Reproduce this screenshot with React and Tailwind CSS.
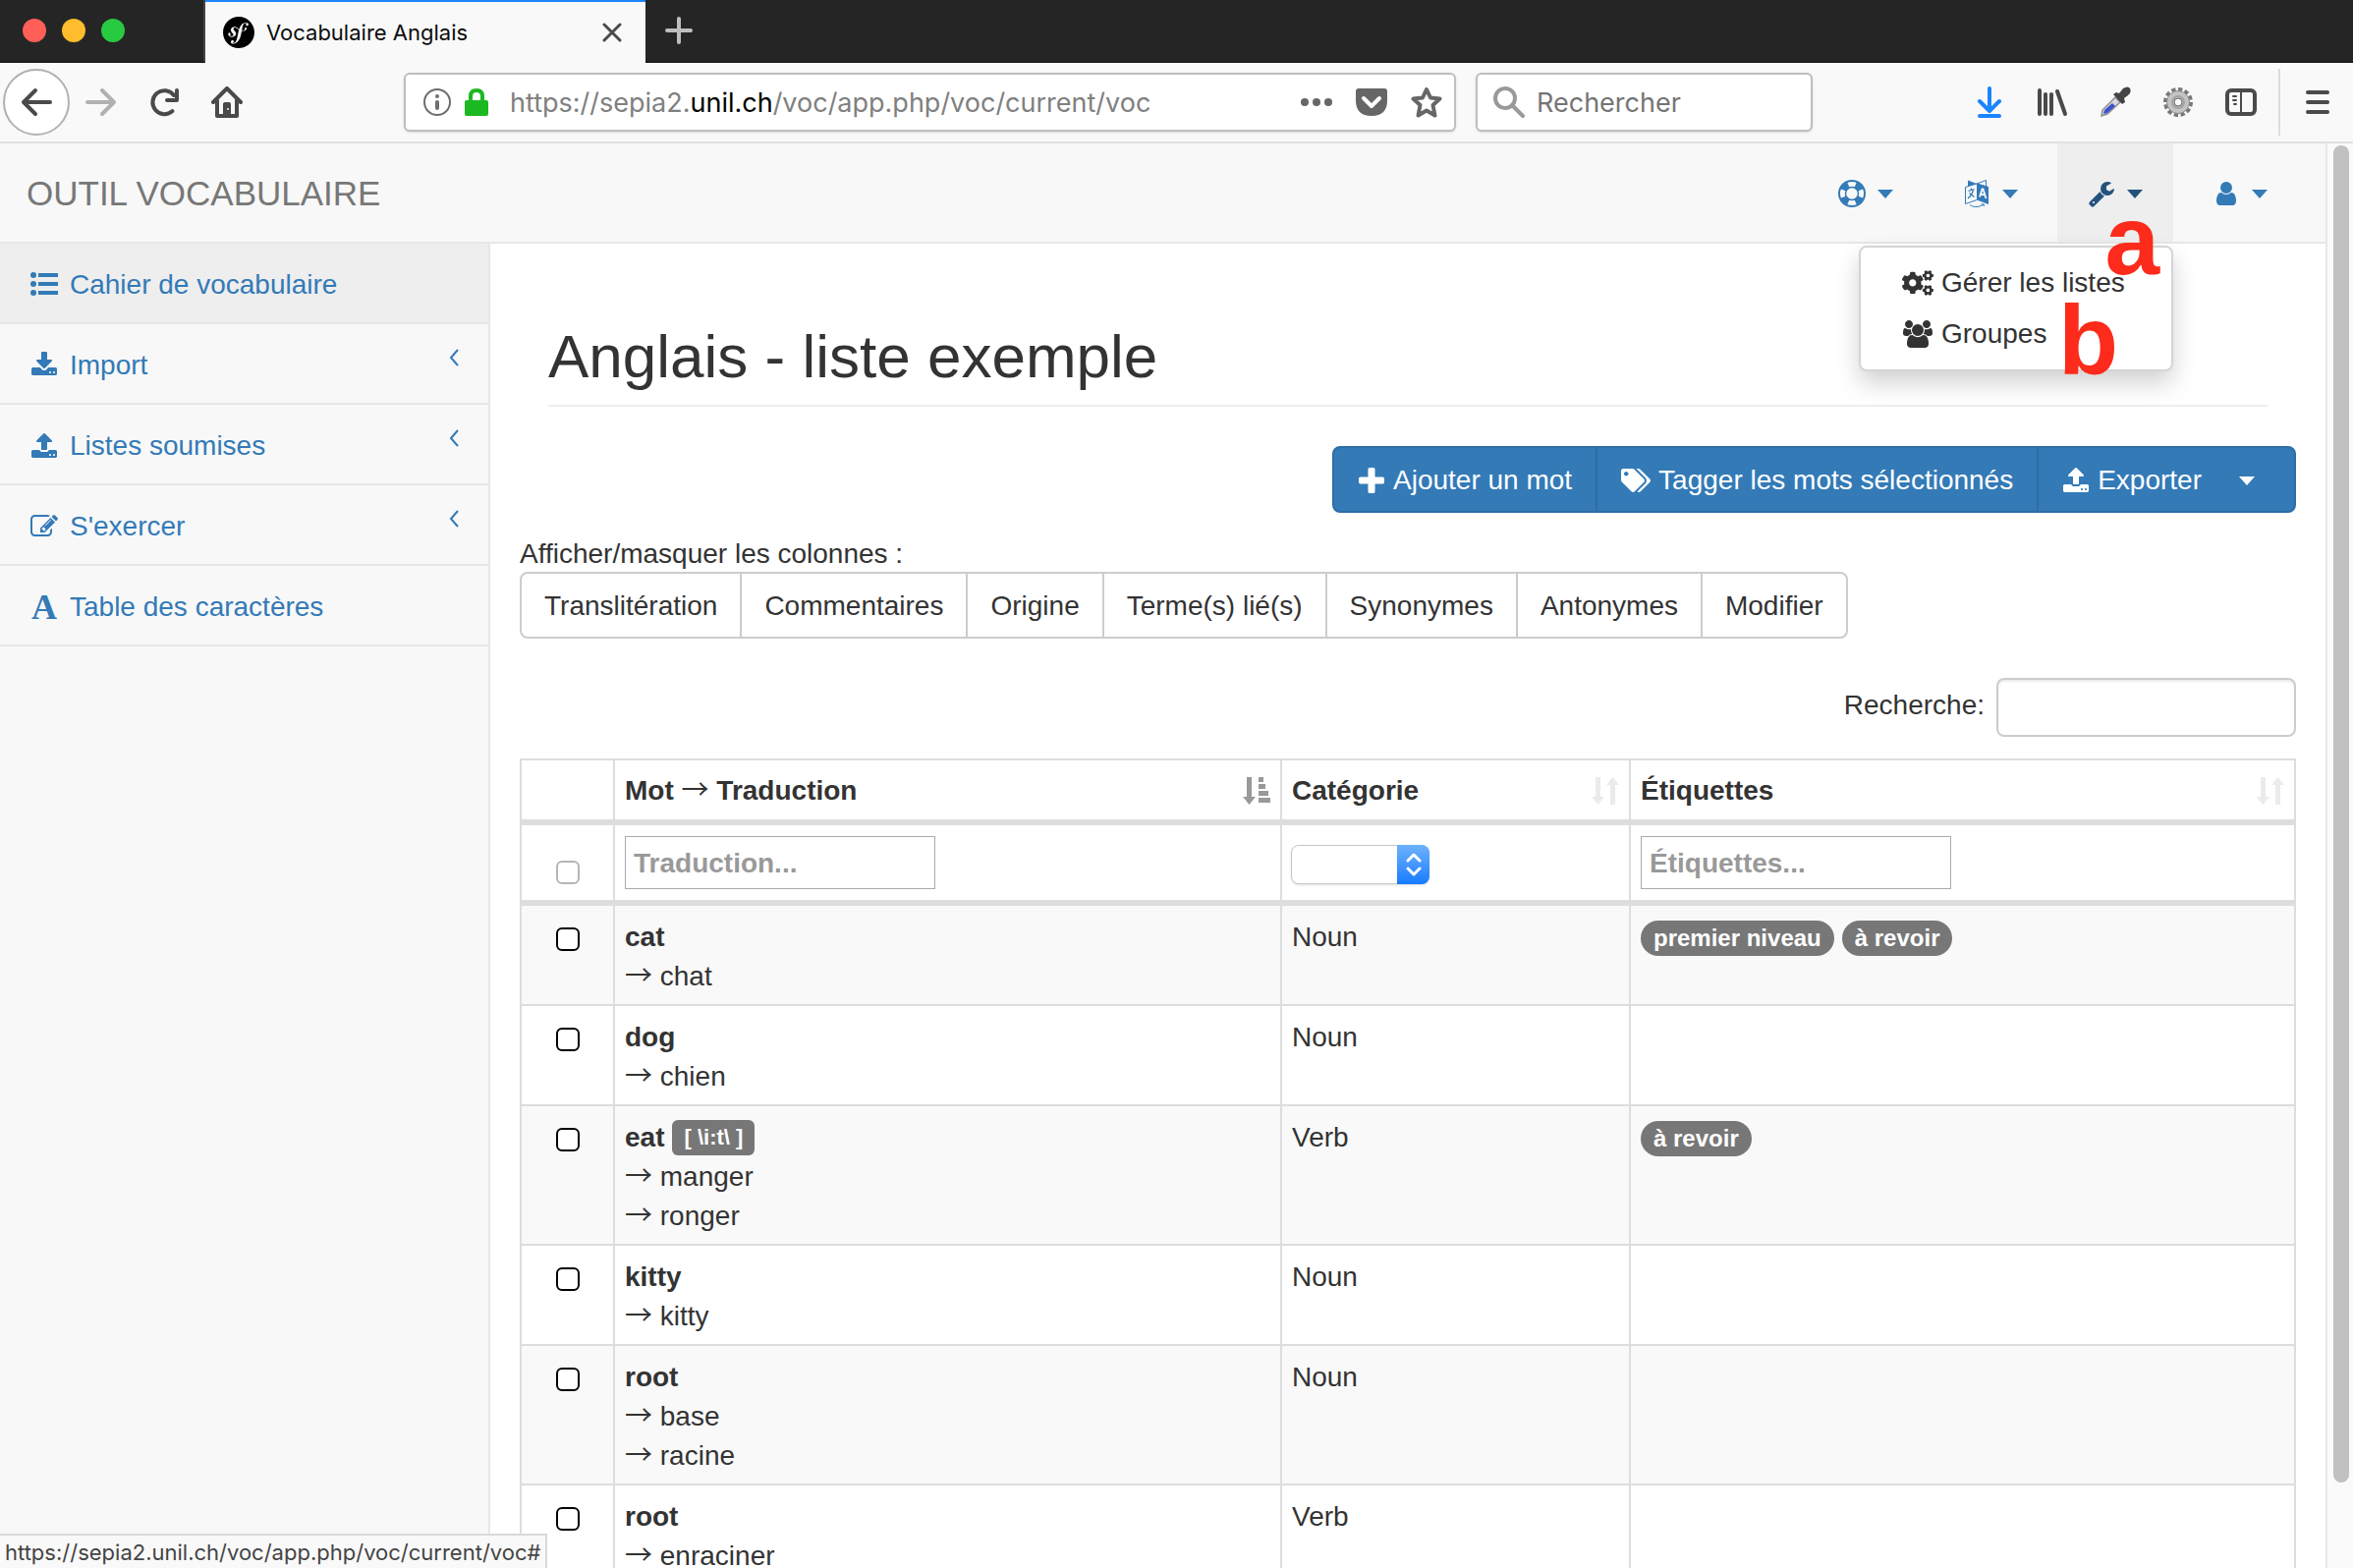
import { useState } from "react";
import { SiSymfony } from "react-icons/si";
import { FaCogs, FaTags } from "react-icons/fa";

const UI_FONT = "font-['Inter',sans-serif]";

const COLUMNS = ["Translitération", "Commentaires", "Origine", "Terme(s) lié(s)", "Synonymes", "Antonymes", "Modifier"];

const WORDS = [
  { id: 1, word: "cat", translations: ["chat"], category: "Noun", tags: ["premier niveau", "à revoir"] },
  { id: 2, word: "dog", translations: ["chien"], category: "Noun", tags: [] },
  { id: 3, word: "eat", phonetic: "[ \\i:t\\ ]", translations: ["manger", "ronger"], category: "Verb", tags: ["à revoir"] },
  { id: 4, word: "kitty", translations: ["kitty"], category: "Noun", tags: [] },
  { id: 5, word: "root", translations: ["base", "racine"], category: "Noun", tags: [] },
  { id: 6, word: "root", translations: ["enraciner"], category: "Verb", tags: [] },
];

/* ---------- icons ---------- */

const PATHS = {
  download: "M1344 1344q0-26-19-45t-45-19-45 19-19 45 19 45 45 19 45-19 19-45zm256 0q0-26-19-45t-45-19-45 19-19 45 19 45 45 19 45-19 19-45zm128-224v320q0 40-28 68t-68 28h-1472q-40 0-68-28t-28-68v-320q0-40 28-68t68-28h465l135 136q58 56 136 56t136-56l136-136h464q40 0 68 28t28 68zm-325-569q17 41-14 70l-448 448q-18 19-45 19t-45-19l-448-448q-31-29-14-70 17-39 59-39h256v-448q0-26 19-45t45-19h256q26 0 45 19t19 45v448h256q42 0 59 39z",
  upload: "M1344 1472q0-26-19-45t-45-19-45 19-19 45 19 45 45 19 45-19 19-45zm256 0q0-26-19-45t-45-19-45 19-19 45 19 45 45 19 45-19 19-45zm128-224v320q0 40-28 68t-68 28h-1472q-40 0-68-28t-28-68v-320q0-40 28-68t68-28h427q21 56 70.5 92t110.5 36h256q61 0 110.5-36t70.5-92h427q40 0 68 28t28 68zm-325-648q-17 40-59 40h-256v448q0 26-19 45t-45 19h-256q-26 0-45-19t-19-45v-448h-256q-42 0-59-40-17-39 14-69l448-448q18-19 45-19t45 19l448 448q31 30 14 69z",
  wrench: "M448 1472q0-26-19-45t-45-19-45 19-19 45 19 45 45 19 45-19 19-45zm644-420l-682 682q-37 37-90 37-52 0-91-37l-106-108q-38-36-38-90 0-53 38-91l681-681q39 98 114.5 173.5t173.5 114.5zm634-435q0 39-23 106-47 134-164.5 217.5t-258.5 83.5q-185 0-316.5-131.5t-131.5-316.5 131.5-316.5 316.5-131.5q58 0 121.5 16.5t107.5 46.5q16 11 16 28t-16 28l-293 169v224l193 107q5-3 79-48.5t135.5-81 70.5-35.5q15 0 23.5 10t8.5 25z",
  user: "M1536 1399q0 109-62.5 187t-150.5 78h-854q-88 0-150.5-78t-62.5-187q0-85 8.5-160.5t31.5-152 58.5-131 94-89 134.5-34.5q131 128 313 128t313-128q76 0 134.5 34.5t94 89 58.5 131 31.5 152 8.5 160.5zm-256-887q0 159-112.5 271.5t-271.5 112.5-271.5-112.5-112.5-271.5 112.5-271.5 271.5-112.5 271.5 112.5 112.5 271.5z",
  plus: "M1600 736v192q0 40-28 68t-68 28h-416v416q0 40-28 68t-68 28h-192q-40 0-68-28t-28-68v-416h-416q-40 0-68-28t-28-68v-192q0-40 28-68t68-28h416v-416q0-40 28-68t68-28h192q40 0 68 28t28 68v416h416q40 0 68 28t28 68z",
  edit: "M888 1184l116-116-152-152-116 116v56h96v96h56zm440-720q-16-16-33 1l-350 350q-17 17-1 33t33-1l350-350q17-17 1-33zm80 594v190q0 119-84.5 203.5t-203.5 84.5h-832q-119 0-203.5-84.5t-84.5-203.5v-832q0-119 84.5-203.5t203.5-84.5h832q63 0 117 25 15 7 18 23 3 17-9 29l-49 49q-14 14-32 8-23-6-45-6h-832q-66 0-113 47t-47 113v832q0 66 47 113t113 47h832q66 0 113-47t47-113v-126q0-13 9-22l64-64q15-15 35-7t20 29zm-96-738l288 288-672 672h-288v-288zm444 132l-92 92-288-288 92-92q28-28 68-28t68 28l152 152q28 28 28 68t-28 68z",
};

function Glyph({ name, viewBox = "0 0 1792 1792", className = "size-7" }) {
  return (
    <svg viewBox={viewBox} fill="currentColor" className={className} aria-hidden="true">
      <path d={PATHS[name]} />
    </svg>
  );
}

function UsersIcon() {
  return (
    <svg viewBox="0 0 2048 1792" fill="currentColor" className="h-7 w-8" aria-hidden="true">
      <path d="M657 896q-162 5-265 128h-134q-82 0-138-40.5t-56-118.5q0-353 124-353 6 0 43.5 21t97.5 42.5 119 21.5q67 0 133-23-5 37-5 66 0 139 81 256zm1071 637q0 120-73 189.5t-194 69.5h-874q-121 0-194-69.5t-73-189.5q0-53 3.5-103.5t14-109 26.5-108.5 43-97.5 62-81 85.5-53.5 111.5-20q10 0 43 21.5t73 48 107 48 135 21.5 135-21.5 107-48 73-48 43-21.5q61 0 111.5 20t85.5 53.5 62 81 43 97.5 26.5 108.5 14 109 3.5 103.5zm-1024-1277q0 106-75 181t-181 75-181-75-75-181 75-181 181-75 181 75 75 181zm704 384q0 159-112.5 271.5t-271.5 112.5-271.5-112.5-112.5-271.5 112.5-271.5 271.5-112.5 271.5 112.5 112.5 271.5zm576 225q0 78-56 118.5t-138 40.5h-134q-103-123-265-128 81-117 81-256 0-29-5-66 66 23 133 23 59 0 119-21.5t97.5-42.5 43.5-21q124 0 124 353zm-128-609q0 106-75 181t-181 75-181-75-75-181 75-181 181-75 181 75 75 181z" />
    </svg>
  );
}

function ListIcon() {
  return (
    <svg viewBox="0 0 28 28" fill="currentColor" className="size-7" aria-hidden="true">
      <circle cx="3" cy="4" r="3" />
      <circle cx="3" cy="13" r="3" />
      <circle cx="3" cy="22" r="3" />
      <path d="M8 2h20v4H8zM8 11h20v4H8zM8 20h20v4H8z" />
    </svg>
  );
}

function LifeRingIcon() {
  return (
    <svg viewBox="0 0 28 28" fill="none" stroke="currentColor" className="size-7" aria-hidden="true">
      <circle cx="14" cy="14" r="13" strokeWidth="2" />
      <circle cx="14" cy="14" r="6.500" strokeWidth="1.500" />
      <circle cx="14" cy="14" r="9.500" strokeWidth="6" pathLength="8" strokeDasharray="1 1" strokeDashoffset="-0.5" />
    </svg>
  );
}

function TranslateIcon() {
  return (
    <svg viewBox="0 0 28 28" className="size-7" aria-hidden="true">
      <path d="M5 .5v6L14 4z" fill="currentColor" />
      <path d="M14 4L23.500 .5V7L14 4" fill="none" stroke="currentColor" strokeWidth="1" />
      <path d="M14 3.500l12 3.500v18l-12-4.500z" fill="currentColor" />
      <path d="M14 4L2.500 7.500v17L14 20.500" fill="none" stroke="currentColor" strokeWidth="1" />
      <path d="M5.500 11.500l6-2M8 8.500l.5 2M10.500 10.500c-1 4-3 6.500-5.500 8.500M6.500 13.500l5 4" fill="none" stroke="currentColor" strokeWidth="1.100" />
      <path d="M17 17.500l2.500-8h1l3 9.500M18 14.500l4.500 1" fill="none" stroke="#f8f8f8" strokeWidth="1.800" />
      <path d="M7 25.500c4 3 10 2.500 14-.5M18.500 25h2.800v2" fill="none" stroke="currentColor" strokeWidth="1" />
    </svg>
  );
}

function SortIcon({ active }) {
  if (active) {
    return (
      <svg viewBox="0 0 28 28" fill="currentColor" className="size-7 text-[#999]" aria-hidden="true">
        <path d="M4 0h5v20h4l-6.500 8L0 20h4zM16 0h5v5h-5zM16 7h7v5h-7zM16 14h10v5H16zM16 21h12v5H16z" />
      </svg>
    );
  }
  return (
    <svg viewBox="0 0 28 28" fill="currentColor" className="size-7 text-[#ebebeb]" aria-hidden="true">
      <path d="M4 0h5v20h4l-6.500 8L0 20h4zM19 28h5V8h4l-6.500-8L15 8h4z" />
    </svg>
  );
}

function Caret({ className = "" }) {
  return <svg viewBox="0 0 16 9" fill="currentColor" className={`h-[9px] w-4 ${className}`} aria-hidden="true"><path d="M0 0h16l-8 9z" /></svg>;
}

function Arrow() {
  return <span className="font-['Noto_Sans_CJK_JP',sans-serif] leading-none font-normal">→</span>;
}

function Stroke({ d, size = "size-8", children, className = "text-[#4a4a4a]" }) {
  return (
    <svg viewBox="0 0 32 32" fill="none" stroke="currentColor" strokeWidth="4" strokeLinecap="round" strokeLinejoin="round" className={`${size} ${className}`} aria-hidden="true">
      {d && <path d={d} />}
      {children}
    </svg>
  );
}

/* ---------- browser ---------- */

function TitleBar() {
  return (
    <div className="flex h-16 shrink-0 bg-[#252525]">
      <div className="flex w-[209px] items-center gap-4 border-r-2 border-b-2 border-r-[#444] border-b-[#1a1a1a] pl-[23px]">
        <span className="size-6 rounded-full bg-[#ff5f57]" />
        <span className="size-6 rounded-full bg-[#ffbd2e]" />
        <span className="size-6 rounded-full bg-[#28ca41]" />
      </div>
      <div className="flex w-[448px] items-center border-t-2 border-[#1b84ff] bg-[#f9f9f9] pr-6 pl-[18px]">
        <SiSymfony size={32} className="text-black" />
        <span className={`ml-3 flex-1 text-[22px] text-[#0c0c0d] ${UI_FONT}`}>Vocabulaire Anglais</span>
        <button aria-label="Fermer l'onglet">
          <svg viewBox="0 0 20 20" className="size-5" stroke="#4a4a4a" strokeWidth="3" strokeLinecap="round"><path d="M2 2l16 16M18 2L2 18" /></svg>
        </button>
      </div>
      <button aria-label="Nouvel onglet" className="flex flex-1 items-center border-b-2 border-[#1a1a1a] pl-5">
        <svg viewBox="0 0 28 28" className="size-7" stroke="#bebebe" strokeWidth="4" strokeLinecap="round"><path d="M14 2v24M2 14h24" /></svg>
      </button>
    </div>
  );
}

function Toolbar() {
  return (
    <div className={`flex h-[82px] shrink-0 items-center border-b-2 border-[#e0e0e0] bg-[#f9f9f9] pr-6 ${UI_FONT}`}>
      <div className="flex w-[411px] items-center gap-8 pl-[3px]">
        <button aria-label="Précédent" className="flex size-[68px] items-center justify-center rounded-full border-2 border-[#b1b1b1] bg-white">
          <Stroke d="M30 16H3M15 4L3 16l12 12" />
        </button>
        <button aria-label="Suivant" className="-ml-4"><Stroke d="M2 16h27M17 4l12 12-12 12" className="text-[#b1b1b1]" /></button>
        <button aria-label="Actualiser">
          <Stroke d="M24.500 25A12 12 0 1 1 26 9M29 4v10H19" />
        </button>
        <button aria-label="Accueil">
          <svg viewBox="0 0 32 32" className="size-8" aria-hidden="true">
            <path d="M2 16L16 2l14 14M6 14v16h20V14" fill="none" stroke="#4a4a4a" strokeWidth="4" strokeLinecap="round" strokeLinejoin="round" />
            <path d="M12 29V18q0-2 2-2h4q2 0 2 2v11z" fill="#4a4a4a" />
            <circle cx="17" cy="23" r="1" fill="#f9f9f9" />
          </svg>
        </button>
      </div>
      <div className="flex h-[60px] w-[1071px] items-center rounded-md border-2 border-[#bebebe] bg-white pr-3 pl-[18px] shadow-sm">
        <svg viewBox="0 0 28 28" className="size-7" aria-hidden="true">
          <circle cx="14" cy="14" r="13" fill="none" stroke="#6e6e6e" strokeWidth="2" />
          <circle cx="14" cy="8" r="2" fill="#6e6e6e" />
          <rect x="12" y="12" width="4" height="10" rx="2" fill="#6e6e6e" />
        </svg>
        <svg viewBox="0 0 24 28" className="mx-[14px] h-7 w-6" aria-hidden="true">
          <path d="M6 14V8q0-6 6-6t6 6v6" fill="none" stroke="#1cb821" strokeWidth="4" />
          <rect y="12" width="24" height="16" rx="2" fill="#1cb821" />
        </svg>
        <span className="ml-2 flex-1 pt-0.5 text-[27px] text-[#808080]">
          https://sepia2.<span className="text-black">unil.ch</span>/voc/app.php/voc/current/voc
        </span>
        <div className="flex items-center gap-6 text-[#666]">
          <svg viewBox="0 0 32 32" className="size-8" fill="currentColor"><circle cx="4" cy="16" r="4" /><circle cx="16" cy="16" r="4" /><circle cx="28" cy="16" r="4" /></svg>
          <svg viewBox="0 0 32 32" className="size-8">
            <path d="M3 2h26q3 0 3 3v9q0 16-16 16T0 14V5q0-3 3-3z" fill="currentColor" />
            <path d="M8 12l8 8 8-8" fill="none" stroke="white" strokeWidth="4" strokeLinecap="round" strokeLinejoin="round" />
          </svg>
          <Stroke className="text-[#666]" d="M16 3l4 8.500 9.500 1-7 6.500 2 10.500-8.500-5-8.500 5 2-10.500-7-6.500 9.500-1z" />
        </div>
      </div>
      <div className="ml-5 flex h-[60px] w-[343px] items-center gap-3 rounded-md border-2 border-[#bebebe] bg-white px-4 shadow-sm">
        <Stroke className="shrink-0 text-[#999]"><circle cx="12" cy="12" r="10" /><path d="M19 19l11 11" /></Stroke>
        <input aria-label="Rechercher" placeholder="Rechercher" className="w-full min-w-0 pt-0.5 text-[27px] outline-none placeholder:text-[#757575]" />
      </div>
      <div className="ml-auto flex items-center gap-8">
        <button aria-label="Téléchargements"><Stroke className="text-[#1b84ff]" d="M16 2v23M6 15l10 10 10-10M6 30h20" /></button>
        <button aria-label="Bibliothèque">
          <Stroke><path d="M3 4v24M9 8v20M15 8v20M21 5l8 23" strokeWidth="4" /></Stroke>
        </button>
        <button aria-label="Pipette">
          <svg viewBox="0 0 32 32" className="size-8" aria-hidden="true">
            <path d="M2 30l1-6L16 11l5 5L8 28z" fill="#d9d9de" stroke="#8e8e92" strokeWidth="1.500" />
            <path d="M4 28l1-4 8-7 3 3-8 7z" fill="#3a52cc" />
            <path d="M14 8l3-2 3 1 4-5q5-3 7 0 2 4-2 7l-4 3 1 4-3 2z" fill="#444" />
          </svg>
        </button>
        <button aria-label="Réglages">
          <svg viewBox="0 0 32 32" className="size-8" aria-hidden="true">
            <circle cx="16" cy="16" r="13" fill="none" stroke="#777" strokeWidth="4" pathLength="48" strokeDasharray="2.500 1.500" />
            <circle cx="16" cy="16" r="11.500" fill="#c4c4c4" stroke="#8a8a8a" />
            <circle cx="16" cy="16" r="6" fill="none" stroke="#a2a2a2" strokeWidth="2" />
            <circle cx="16" cy="16" r="4" fill="#f9f9f9" stroke="#666" />
          </svg>
        </button>
        <button aria-label="Panneaux latéraux">
          <Stroke><rect x="2" y="4" width="28" height="24" rx="4" /><path d="M16 4v24M8 10h3M8 14h3M9 18h2" strokeWidth="2" /></Stroke>
        </button>
        <button aria-label="Menu" className="-ml-[10px] flex h-[68px] items-center border-l-2 border-[#dcdcdc] pl-[26px]">
          <svg viewBox="0 0 24 24" className="size-6" stroke="#4a4a4a" strokeWidth="4" strokeLinecap="round"><path d="M2 2h20M2 12h20M2 22h20" /></svg>
        </button>
      </div>
    </div>
  );
}

/* ---------- page ---------- */

function NavItem({ label, active, children }) {
  return (
    <li className="relative flex">
      <button aria-label={label} className={`flex items-center gap-3 px-[31px] pt-0.5 ${active ? "bg-[#eee] text-[#23527c]" : "text-[#337ab7]"}`}>
        {children}
        <Caret />
      </button>
      {active && (
        <div className="absolute top-[104px] right-0 z-10 w-80 rounded-lg border-2 border-[#d4d4d4] bg-white py-[10px] whitespace-nowrap text-[#333] shadow-[0_12px_24px_rgba(0,0,0,0.18)]">
          <a href="#listes" className="flex h-[52px] items-center gap-2 px-[42px]"><FaCogs className="h-7 w-8" />Gérer les listes</a>
          <a href="#groupes" className="flex h-[52px] items-center gap-2 px-[42px]"><UsersIcon />Groupes</a>
          {/* annotations */}
          <span className="absolute top-[-58px] right-3 text-[100px] leading-none font-bold text-[#fc2b1b]">a</span>
          <span className="absolute top-[44px] right-[54px] text-[100px] leading-none font-bold text-[#fc2b1b]">b</span>
        </div>
      )}
    </li>
  );
}

function Navbar() {
  return (
    <header className="flex h-[102px] shrink-0 justify-between border-b-2 border-[#e7e7e7] bg-[#f8f8f8] pr-7 pl-[27px]">
      <a href="#accueil" className="self-center pt-0.5 text-[35px] text-[#777]">OUTIL VOCABULAIRE</a>
      <ul className="flex gap-[9px]">
        <NavItem label="Aide"><LifeRingIcon /></NavItem>
        <NavItem label="Langue"><TranslateIcon /></NavItem>
        <NavItem label="Outils" active><Glyph name="wrench" /></NavItem>
        <NavItem label="Compte"><Glyph name="user" /></NavItem>
      </ul>
    </header>
  );
}

const MENU = [
  { label: "Cahier de vocabulaire", icon: <ListIcon />, active: true },
  { label: "Import", icon: <Glyph name="download" />, sub: true },
  { label: "Listes soumises", icon: <Glyph name="upload" />, sub: true },
  { label: "S'exercer", icon: <Glyph name="edit" />, sub: true },
  { label: "Table des caractères", icon: <span className="w-7 text-center font-['Liberation_Serif',serif] text-[36px] font-bold" aria-hidden="true">A</span> },
];

function Sidebar() {
  return (
    <nav className="w-[499px] shrink-0 border-r-2 border-[#e7e7e7] bg-[#f8f8f8]">
      {MENU.map((m) => (
        <a key={m.label} href="#menu" className={`flex h-[82px] items-center gap-3 border-b-2 border-[#e7e7e7] pt-[3px] pr-[30px] pl-[31px] text-[#337ab7] ${m.active ? "bg-[#eee]" : ""}`}>
          {m.icon}
          <span className="flex-1">{m.label}</span>
          {m.sub && (
            <svg viewBox="0 0 10 18" className="mb-4 h-[18px] w-[10px]" fill="none" stroke="currentColor" strokeWidth="2"><path d="M9 1L2 9l7 8" /></svg>
          )}
        </a>
      ))}
    </nav>
  );
}

function Th({ children, active }) {
  return (
    <th className="border-r-2 border-b-6 border-[#ddd] px-[10px] pt-0.5 text-left">
      <div className="flex items-center justify-between"><span>{children}</span><SortIcon active={active} /></div>
    </th>
  );
}

function WordTable() {
  const [checked, setChecked] = useState([]);
  const toggle = (id) => setChecked((c) => (c.includes(id) ? c.filter((x) => x !== id) : [...c, id]));
  const td = "border-r-2 border-b-2 border-[#ddd] px-[10px] pt-3 pb-2 align-top";
  const filter = "border-r-2 border-b-6 border-[#ddd] px-[10px] text-left";
  const box = "block size-6 appearance-none rounded-md border-2 bg-white checked:bg-[#337ab7]";
  const textFilter = "block h-[54px] w-[316px] border border-[#aaa] px-2 pt-0.5 font-bold placeholder:text-[#999]";

  return (
    <table className="mt-[22px] w-full table-fixed border-separate border-spacing-0 border-t-2 border-l-2 border-[#ddd] leading-10">
      <colgroup>
        <col className="w-[95px]" />
        <col className="w-[679px]" />
        <col className="w-[355px]" />
        <col />
      </colgroup>
      <thead>
        <tr className="h-[66px]">
          <th className="border-r-2 border-b-6 border-[#ddd]" aria-label="Sélection" />
          <Th active>Mot <Arrow /> Traduction</Th>
          <Th>Catégorie</Th>
          <Th>Étiquettes</Th>
        </tr>
        <tr className="h-[82px]">
          <th className={filter}><input type="checkbox" aria-label="Tout sélectionner" className={`mx-auto mt-5 border-[#b5b5b5] ${box}`} /></th>
          <th className={filter}>
            <input aria-label="Filtrer par traduction" placeholder="Traduction..." className={textFilter} />
          </th>
          <th className={filter}>
            <div className="relative mt-1 -ml-px w-[141px]">
              <select aria-label="Filtrer par catégorie" className="block h-10 w-full appearance-none rounded-lg border border-[#c8c8c8] bg-white shadow-sm">
                <option value=""></option>
              </select>
              <span className="pointer-events-none absolute inset-y-0 right-0 flex w-[33px] items-center justify-center rounded-r-lg bg-linear-to-b from-[#6bb1fb] to-[#127bff]">
                <svg viewBox="0 0 16 24" className="h-6 w-4" fill="none" stroke="white" strokeWidth="3" strokeLinecap="round" strokeLinejoin="round"><path d="M2 8l6-6 6 6M2 16l6 6 6-6" /></svg>
              </span>
            </div>
          </th>
          <th className={filter}>
            <input aria-label="Filtrer par étiquettes" placeholder="Étiquettes..." className={textFilter} />
          </th>
        </tr>
      </thead>
      <tbody>
        {WORDS.map((w) => (
          <tr key={w.id} className="odd:bg-[#f9f9f9]">
            <td className={td}>
              <input type="checkbox" aria-label={w.word} checked={checked.includes(w.id)} onChange={() => toggle(w.id)} className={`mx-auto mt-[10px] border-black ${box}`} />
            </td>
            <td className={td}>
              <div className="flex items-center gap-2">
                <b>{w.word}</b>
                {w.phonetic && <span className="h-9 rounded-md bg-[#777] px-3 text-[22px] leading-9 font-bold text-white">{w.phonetic}</span>}
              </div>
              {w.translations.map((t) => <p key={t} className="h-10"><Arrow /> {t}</p>)}
            </td>
            <td className={td}>{w.category}</td>
            <td className={td}>
              <div className="flex gap-2 pt-[3px]">
                {w.tags.map((t) => <span key={t} className="rounded-full bg-[#777] px-[13px] text-[24px] leading-9 font-bold text-white">{t}</span>)}
              </div>
            </td>
          </tr>
        ))}
      </tbody>
    </table>
  );
}

function Content() {
  const primary = "flex items-center gap-2 border-r-2 border-[#2e6da4] px-6 pt-0.5 last:border-r-0";
  return (
    <main className="min-w-0 flex-1 overflow-hidden bg-white px-[30px]">
      <h1 className="mx-[29px] mt-[82px] border-b-2 border-[#eee] pb-4 text-[62px] leading-[66px] font-normal">Anglais - liste exemple</h1>

      <div className="mt-10 flex justify-end">
        <div className="flex h-[68px] rounded-lg border-2 border-[#2e6da4] bg-[#337ab7] text-white">
          <button className={primary}><Glyph name="plus" viewBox="192 128 1408 1408" className="mx-px size-[26px]" />Ajouter un mot</button>
          <button className={primary}><FaTags className="h-7 w-[30px]" />Tagger les mots sélectionnés</button>
          <button className={primary}><Glyph name="upload" />Exporter<Caret className="mr-4 ml-[30px]" /></button>
        </div>
      </div>

      <p className="mt-[22px] pt-0.5 leading-9">Afficher/masquer les colonnes :</p>
      <div className="inline-flex h-[68px] rounded-lg border-2 border-[#ccc]">
        {COLUMNS.map((c) => <button key={c} className="border-r-2 border-[#ccc] px-[23px] pt-0.5 last:border-r-0">{c}</button>)}
      </div>

      <label className="mt-10 flex items-center justify-end gap-3">
        <span className="pb-1">Recherche:</span>
        <input type="search" className="h-[60px] w-[305px] rounded-lg border-2 border-[#ccc] px-5 shadow-[inset_0_2px_2px_rgba(0,0,0,0.075)]" />
      </label>

      <WordTable />
    </main>
  );
}

export default function App() {
  return (
    <div className="relative flex h-screen flex-col overflow-hidden bg-white font-['Liberation_Sans',Arial,sans-serif] text-[28px] leading-10 text-[#333]">
      <TitleBar />
      <Toolbar />
      <div className="flex min-h-0 flex-1">
        <div className="flex min-w-0 flex-1 flex-col">
          <Navbar />
          <div className="flex min-h-0 flex-1">
            <Sidebar />
            <Content />
          </div>
        </div>
        <div className="w-7 shrink-0 border-l-2 border-[#e8e8e8] bg-[#fafafa] pt-0.5 pl-1.5">
          <div className="h-[94%] w-4 rounded-full bg-[#c1c1c1]" />
        </div>
      </div>
      <div className={`absolute bottom-0 left-0 h-[35px] border-t-2 border-r-2 border-[#d9d9d9] bg-[#f9f9f9] px-[5px] text-[22px] leading-[35px] text-[#444] ${UI_FONT}`}>
        https://sepia2.unil.ch/voc/app.php/voc/current/voc#
      </div>
    </div>
  );
}
